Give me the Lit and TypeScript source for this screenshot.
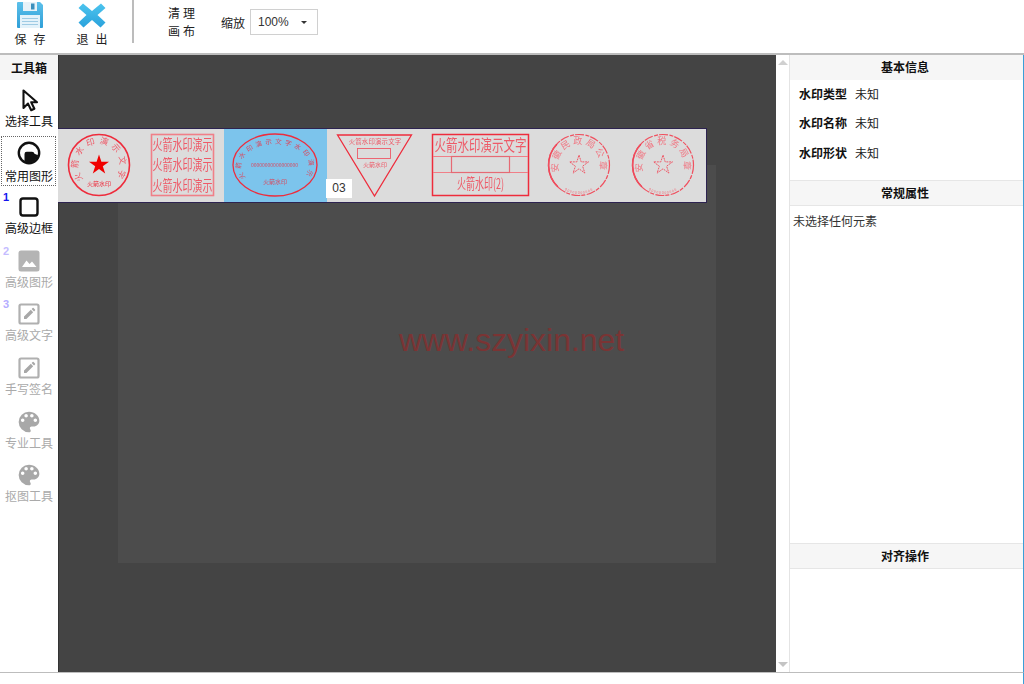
import { LitElement, html, css, svg } from "lit";
import { customElement } from "lit/decorators.js";

const PALETTE = "M12 3a9 9 0 0 0 0 18c.83 0 1.5-.67 1.5-1.5 0-.39-.15-.74-.39-1.01-.23-.26-.38-.61-.38-.99 0-.83.67-1.5 1.5-1.5H16c2.76 0 5-2.24 5-5 0-4.42-4.03-8-9-8zm-5.5 9c-.83 0-1.5-.67-1.5-1.5S5.67 9 6.5 9 8 9.67 8 10.5 7.33 12 6.5 12zm3-4C8.67 8 8 7.33 8 6.5S8.67 5 9.5 5s1.5.67 1.5 1.5S10.33 8 9.5 8zm5 0c-.83 0-1.5-.67-1.5-1.5S13.67 5 14.5 5s1.5.67 1.5 1.5S15.33 8 14.5 8zm3 4c-.83 0-1.5-.67-1.5-1.5S16.67 9 17.5 9s1.5.67 1.5 1.5-.67 1.5-1.5 1.5z";

function arc(cx: number, cy: number, rx: number, ry: number, half: number) {
  const a = (half * Math.PI) / 180;
  const x0 = cx - rx * Math.sin(a), x1 = cx + rx * Math.sin(a);
  const y = cy - ry * Math.cos(a);
  return `M${x0.toFixed(1)} ${y.toFixed(1)} A${rx} ${ry} 0 1 1 ${x1.toFixed(1)} ${y.toFixed(1)}`;
}
function star(cx: number, cy: number, r: number) {
  const p: string[] = [];
  for (let i = 0; i < 10; i++) {
    const rr = i % 2 ? r * 0.382 : r;
    const a = (i * Math.PI) / 5;
    p.push(`${(cx + rr * Math.sin(a)).toFixed(1)},${(cy - rr * Math.cos(a)).toFixed(1)}`);
  }
  return p.join(" ");
}
function arcText(id: string, d: string, text: string, size: number, spacing: number, fill: string) {
  return svg`<path id=${id} d=${d} fill="none"></path>
    <text font-size=${size} fill=${fill} letter-spacing=${spacing} text-anchor="middle"><textPath href=${"#" + id} startOffset="50%">${text}</textPath></text>`;
}
function tallText(x: number, y: number, size: number, sy: number, text: string, fill: string, spacing = 0) {
  return svg`<text transform="translate(${x} ${y}) scale(1 ${sy})" font-size=${size} fill=${fill} text-anchor="middle" letter-spacing=${spacing}>${text}</text>`;
}

const RED = "#ee2c3c";
const SOFT = "#ee5a68";

function dottedSeal(id: string, cx: number, label: string) {
  return svg`
    <path d="M${cx - 21} ${165 + 22} A30.5 30.5 0 0 1 ${cx - 22} 144" fill="none" stroke="#ee3c50" stroke-width="1.6"></path>
    <circle cx=${cx} cy="165" r="30.5" fill="none" stroke="#f0505f" stroke-width="1.2" stroke-dasharray="9 1.5 4 1"></circle>
    ${arcText(id, arc(cx, 165, 21, 21, 125), label, 9, 2.4, "#f07884")}
    ${arcText(id + "b", `M${cx - 20} 186 A29 29 0 0 0 ${cx + 20} 186`, "00000000000", 3.5, 0.8, "#f0707c")}
    <polygon points=${star(cx, 165, 10)} fill="none" stroke="#ee5a68" stroke-width="1" stroke-dasharray="2 0.8"></polygon>`;
}

@customElement("app-root")
export class AppRoot extends LitElement {
  static styles = css`
    :host { display: grid; grid-template-rows: 55px 1fr 12px; height: 684px; width: 1024px; overflow: hidden; background: #fff; font-family: "Noto Sans CJK SC", sans-serif; font-size: 12px; color: #222; position: relative; }
    .toolbar { display: flex; align-items: flex-start; height: 53px; border-bottom: 2px solid #bdbdbd; background: #fff; }
    .tbtn { display: flex; flex-direction: column; align-items: center; width: 60px; flex: none; font-size: 12px; line-height: 14px; color: #222; }
    .tbtn svg { display: block; margin-top: 1px; margin-bottom: 2px; }
    .tbtn span { letter-spacing: 7px; padding-left: 7px; margin-top: 1px; white-space: nowrap; }
    .exit { margin-left: 2px; }
    .sep { width: 2px; height: 43px; background: #bcbcbc; margin-left: 10px; flex: none; }
    .clear { margin-left: 34px; margin-top: 4px; font-size: 12px; line-height: 18px; letter-spacing: 3px; width: 30px; }
    .zoomwrap { display: flex; align-items: center; margin-left: 23px; margin-top: 9px; gap: 5px; height: 26px; }
    .select { box-sizing: border-box; width: 68px; height: 26px; border: 1px solid #d0d0d0; display: flex; align-items: center; justify-content: space-between; padding: 0 10px 0 7px; font-family: "Liberation Sans", sans-serif; color: #333; }
    .caret { width: 0; height: 0; border-left: 3px solid transparent; border-right: 3px solid transparent; border-top: 3.5px solid #333; }
    .main { display: grid; grid-template-columns: 58px 718px 14px 1fr; min-height: 0; position: relative; }
    .side { display: flex; flex-direction: column; background: #fff; }
    .side-title { height: 25px; background: #f5f5f5; display: flex; align-items: center; justify-content: center; font-weight: 700; color: #111; font-size: 12px; flex: none; }
    .gap { height: 1.5px; flex: none; }
    .tool { position: relative; height: 53.7px; flex: none; display: flex; flex-direction: column; align-items: center; justify-content: flex-start; padding-top: 6px; box-sizing: border-box; color: #111; line-height: 16px; white-space: nowrap; }
    .tool svg { display: block; margin-bottom: 1px; width: 24px; height: 24px; }
    .tool.active span { margin-top: 2px; }
    .tool.off { color: #aaa; }
    .tool.active::after { content: ""; position: absolute; left: 1px; right: 2px; top: 1px; bottom: 3px; border: 1px dotted #666; }
    .num { position: absolute; left: 3px; top: 2px; font: 700 11px/12px "Liberation Sans", sans-serif; }
    .canvas { border-left: 1px solid #333; background: #444; display: flex; align-items: center; justify-content: center; position: relative; }
    .sheet { width: 598px; height: 398px; background: #4c4c4c; margin-right: 2px; }
    .watermark { position: absolute; left: 340px; top: 266px; font: 31.9px/38px "Liberation Sans", sans-serif; color: #7a3434; white-space: nowrap; }
    .strip { position: absolute; left: 58px; top: 73px; box-sizing: border-box; width: 649px; height: 75px; background: #dcdcdc; border: 1px solid #2d2350; border-left: none; display: flex; }
    .cell { flex: none; height: 73px; }
    .cell svg { display: block; filter: blur(0.3px); }
    .cell text { font-family: "Noto Sans CJK SC", sans-serif; }
    .cell.sel { background: #7cc4ec; }
    .tip { position: absolute; left: 326px; top: 124px; width: 26px; height: 19px; background: #fff; color: #333; font: 12px/19px "Liberation Sans", sans-serif; text-align: center; }
    .scroll { background: #fff; border-right: 1px solid #e4e4e4; display: flex; flex-direction: column; justify-content: space-between; align-items: center; padding: 5px 0 5px 0; }
    .up { width: 0; height: 0; border-left: 5px solid transparent; border-right: 5px solid transparent; border-bottom: 5px solid #d0d0d0; }
    .down { width: 0; height: 0; border-left: 5px solid transparent; border-right: 5px solid transparent; border-top: 5px solid #c4c4c4; }
    .panel { display: flex; flex-direction: column; border-right: 1px solid #3a9fd8; min-width: 0; }
    .phead { flex: none; box-sizing: border-box; height: 26px; background: #f6f6f6; display: flex; align-items: center; justify-content: center; font-weight: 700; color: #111; border-top: 1px solid #e6e6e6; border-bottom: 1px solid #e6e6e6; padding: 0 3px 2px 0; }
    .phead.first { border-top: none; height: 25px; border-bottom: none; }
    .info { flex: none; height: 100px; padding: 0 9px; box-sizing: border-box; display: flex; flex-direction: column; margin-top: -1.3px; margin-bottom: 1.3px; }
    .row { display: flex; gap: 8px; height: 29.5px; align-items: center; }
    .row b { font-weight: 700; color: #111; }
    .general { height: 337px; flex: none; padding: 7px 3px; box-sizing: border-box; color: #333; line-height: 16px; }
    .footer { border-top: 1px solid #bdbdbd; border-right: 1px solid #3a9fd8; background: #fff; }
  `;

  private tool(label: string, icon: unknown, opts: { num?: string; numColor?: string; off?: boolean; active?: boolean } = {}) {
    const cls = `tool${opts.off ? " off" : ""}${opts.active ? " active" : ""}`;
    return html`<div class=${cls}>
      ${opts.num ? html`<span class="num" style="color:${opts.numColor}">${opts.num}</span>` : ""}
      ${icon}<span>${label}</span>
    </div>`;
  }

  render() {
    const cursor = html`<svg viewBox="0 0 24 24"><path d="M6.5 2.5 V20 L11 15.6 L14.2 22.2 L17.4 20.7 L14.2 14.3 H20 Z" fill="#fff" stroke="#111" stroke-width="2.1" stroke-linejoin="round"/></svg>`;
    const shape = html`<svg viewBox="0 0 24 24"><circle cx="12" cy="12" r="10.2" fill="#fff" stroke="#111" stroke-width="2.4"/><path d="M7.5 13 q0-2.2 2.2-2.2 h5.3 q2 0 2.5 2 l3.6 1.4 a9.5 9.5 0 0 1 -13.6 6.4 z" fill="#111"/></svg>`;
    const border = html`<svg viewBox="0 0 24 24"><rect x="3.5" y="3.5" width="17" height="17" rx="2.5" fill="none" stroke="#111" stroke-width="2.4"/></svg>`;
    const image = html`<svg viewBox="0 0 24 24"><rect x="1.5" y="1.5" width="21" height="21" rx="2.5" fill="#b4b4b4"/><path d="M5 18 L9.5 11.5 L12.5 15 L15 12.5 L19.5 18 Z" fill="#fff"/></svg>`;
    const edit = html`<svg viewBox="0 0 24 24"><rect x="2.5" y="2.5" width="19" height="19" rx="1.5" fill="#fff" stroke="#b0b0b0" stroke-width="2.2"/><path d="M7 17 v-2.4 l6.8-6.8 2.4 2.4 -6.8 6.8 z M14.6 7 l1-1 a.7.7 0 0 1 1 0 l1.4 1.4 a.7.7 0 0 1 0 1 l-1 1 z" fill="#a8a8a8"/></svg>`;
    const palette = html`<svg viewBox="0 0 24 24"><path d=${PALETTE} transform="translate(-1.8 -1.8) scale(1.15)" fill="#a8a8a8"/></svg>`;

    return html`
      <div class="toolbar">
        <div class="tbtn save">
          <svg width="30" height="28" viewBox="0 0 30 28">
            <defs><linearGradient id="fl" x1="0" y1="0" x2="0" y2="1"><stop offset="0" stop-color="#5cc0ea"/><stop offset="1" stop-color="#2f9fd8"/></linearGradient></defs>
            <path d="M2 2 q0-1 1-1 h22 l3 3 v22 q0 1-1 1 H3 q-1 0-1-1 z" fill="url(#fl)"/>
            <rect x="8" y="1" width="14" height="9" fill="#e8f2f8"/>
            <rect x="16" y="2.5" width="3.5" height="6" fill="#3c8fbc"/>
            <rect x="5" y="14" width="20" height="13" fill="#e4f2fa"/>
            <path d="M7 17.5 h16 M7 20.5 h16 M7 23.5 h16" stroke="#9fcbe4" stroke-width="1"/>
          </svg>
          <span>保存</span>
        </div>
        <div class="tbtn exit">
          <svg width="30" height="28" viewBox="0 0 30 28">
            <defs><linearGradient id="xg" x1="0" y1="0" x2="0" y2="1"><stop offset="0" stop-color="#4cc4ee"/><stop offset="1" stop-color="#2aa2dc"/></linearGradient></defs>
            <path d="M6 2.5 l9 7.5 9-7.5 4.5 4.5 -8 7 8 7.5 -5 5 -8.5-7.5 -8.5 7.5 -5-5 8-7.5 -8-7 z" fill="url(#xg)"/>
          </svg>
          <span>退出</span>
        </div>
        <div class="sep"></div>
        <div class="clear">清理<br />画布</div>
        <div class="zoomwrap">
          <span>缩放</span>
          <div class="select"><span>100%</span><span class="caret"></span></div>
        </div>
      </div>

      <div class="main">
        <div class="side">
          <div class="side-title">工具箱</div>
          <div class="gap"></div>
          ${this.tool("选择工具", cursor)}
          ${this.tool("常用图形", shape, { active: true })}
          ${this.tool("高级边框", border, { num: "1", numColor: "#1414ee" })}
          ${this.tool("高级图形", image, { num: "2", numColor: "#c4bcff", off: true })}
          ${this.tool("高级文字", edit, { num: "3", numColor: "#b4acff", off: true })}
          ${this.tool("手写签名", edit, { off: true })}
          ${this.tool("专业工具", palette, { off: true })}
          ${this.tool("抠图工具", palette, { off: true })}
        </div>

        <div class="canvas">
          <div class="sheet"></div>
          <div class="watermark">www.szyixin.net</div>
        </div>

        <div class="strip">
          <div class="cell"><svg width="83" height="73" viewBox="58 129 83 73">
            <circle cx="99" cy="165" r="30.5" fill="none" stroke=${RED} stroke-width="1.6"/>
            ${arcText("a1", arc(99, 165, 21, 21, 122), "火箭水印演示文字", 8.5, 3.6, SOFT)}
            <polygon points=${star(99, 165, 10.5)} fill="#f00000"/>
            <text x="99" y="186" font-size="6" fill=${RED} text-anchor="middle">火箭水印</text>
          </svg></div>
          <div class="cell"><svg width="83" height="73" viewBox="141 129 83 73">
            <rect x="151.5" y="134.5" width="62" height="61" fill="none" stroke="#f07f88" stroke-width="1.6"/>
            ${tallText(182.5, 150, 10, 1.45, "火箭水印演示", SOFT)}
            ${tallText(182.5, 170, 10, 1.45, "火箭水印演示", SOFT)}
            ${tallText(182.5, 191, 10, 1.45, "火箭水印演示", SOFT)}
          </svg></div>
          <div class="cell sel"><svg width="103" height="73" viewBox="224 129 103 73">
            <ellipse cx="275" cy="165" rx="42" ry="31" fill="none" stroke=${RED} stroke-width="1.3"/>
            ${arcText("a3", arc(275, 166, 34, 22, 112), "火箭水印演示文字水印演示", 6.5, 3, "#d84a60")}
            <text x="274.5" y="167" font-size="5" fill="#d84a60" text-anchor="middle">00000000000000000</text>
            <text x="275" y="184" font-size="6" fill="#d84a60" text-anchor="middle">火箭水印</text>
          </svg></div>
          <div class="cell"><svg width="94" height="73" viewBox="327 129 94 73">
            <path d="M337.5 135 H411.5 L374.5 196 Z" fill="none" stroke=${RED} stroke-width="1.3"/>
            <text x="375" y="144" font-size="6.4" fill=${SOFT} text-anchor="middle" letter-spacing="0.2">火箭水印演示文字</text>
            <rect x="357.5" y="148.5" width="33" height="10" fill="none" stroke=${SOFT} stroke-width="0.9"/>
            <text x="375" y="167" font-size="6" fill=${SOFT} text-anchor="middle">火箭水印</text>
          </svg></div>
          <div class="cell"><svg width="116" height="73" viewBox="421 129 116 73">
            <rect x="432.5" y="134.5" width="96" height="61" fill="none" stroke=${RED} stroke-width="1.5"/>
            <path d="M433 156.5 H528 M433 172.5 H528" stroke="#f07f88" stroke-width="1.2"/>
            <rect x="451.5" y="156.5" width="58" height="16" fill="none" stroke="#e66a74" stroke-width="1.2"/>
            ${tallText(480.5, 151, 11.5, 1.35, "火箭水印演示文字", SOFT)}
            ${tallText(480.5, 189, 9, 1.6, "火箭水印(2)", SOFT)}
          </svg></div>
          <div class="cell"><svg width="84" height="73" viewBox="537 129 84 73">
            ${dottedSeal("a6", 579, "安徽民政局公章")}
          </svg></div>
          <div class="cell"><svg width="84" height="73" viewBox="621 129 84 73">
            ${dottedSeal("a7", 663, "安徽省税务局章")}
          </svg></div>
        </div>
        <div class="tip">03</div>

        <div class="scroll"><span class="up"></span><span class="down"></span></div>

        <div class="panel">
          <div class="phead first">基本信息</div>
          <div class="info">
            <div class="row"><b>水印类型</b><span>未知</span></div>
            <div class="row"><b>水印名称</b><span>未知</span></div>
            <div class="row"><b>水印形状</b><span>未知</span></div>
          </div>
          <div class="phead">常规属性</div>
          <div class="general">未选择任何元素</div>
          <div class="phead">对齐操作</div>
        </div>
      </div>

      <div class="footer"></div>
    `;
  }
}
